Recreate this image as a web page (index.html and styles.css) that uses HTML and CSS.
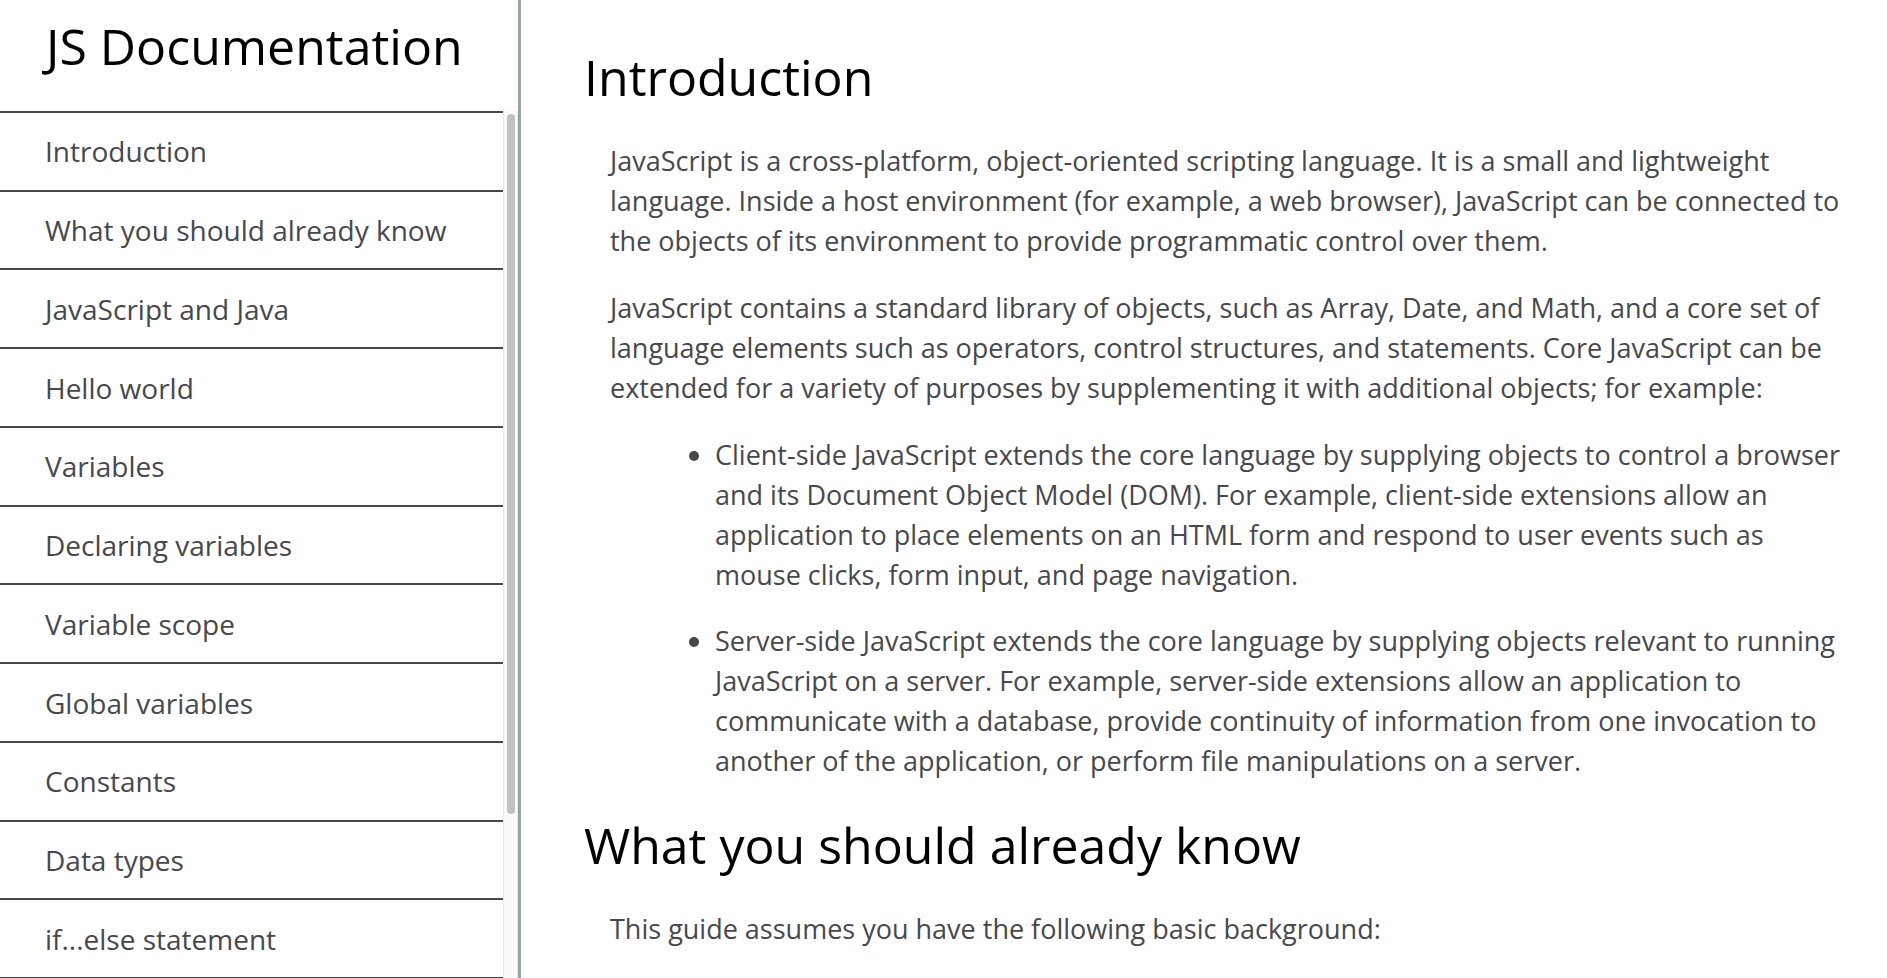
FILE: index.html
```html
<!DOCTYPE html>
<html lang="en">
<head>
<meta charset="utf-8">
<title>JS Documentation</title>
<link rel="stylesheet" href="styles.css">
</head>
<body>
<div class="page">
  <nav class="sidebar" aria-labelledby="nav-title">
    <h1 class="sidebar-title" id="nav-title">JS Documentation</h1>
    <div class="sidebar-body">
      <ul class="nav-list">
        <li class="nav-item"><a class="nav-link" href="#introduction">Introduction</a></li>
        <li class="nav-item"><a class="nav-link" href="#what_you_should_already_know">What you should already know</a></li>
        <li class="nav-item"><a class="nav-link" href="#javascript_and_java">JavaScript and Java</a></li>
        <li class="nav-item"><a class="nav-link" href="#hello_world">Hello world</a></li>
        <li class="nav-item"><a class="nav-link" href="#variables">Variables</a></li>
        <li class="nav-item"><a class="nav-link" href="#declaring_variables">Declaring variables</a></li>
        <li class="nav-item"><a class="nav-link" href="#variable_scope">Variable scope</a></li>
        <li class="nav-item"><a class="nav-link" href="#global_variables">Global variables</a></li>
        <li class="nav-item"><a class="nav-link" href="#constants">Constants</a></li>
        <li class="nav-item"><a class="nav-link" href="#data_types">Data types</a></li>
        <li class="nav-item"><a class="nav-link" href="#if_else_statement">if...else statement</a></li>
      </ul>
      <div class="scroll-track" aria-hidden="true"><div class="scroll-thumb"></div></div>
    </div>
  </nav>
  <main class="content">
    <section class="doc-section" id="introduction">
      <h2 class="doc-heading">Introduction</h2>
      <div class="doc-body">
        <p class="doc-text">JavaScript is a cross-platform, object-oriented scripting language. It is a small and lightweight language. Inside a host environment (for example, a web browser), JavaScript can be connected to the objects of its environment to provide programmatic control over them.</p>
        <p class="doc-text">JavaScript contains a standard library of objects, such as Array, Date, and Math, and a core set of language elements such as operators, control structures, and statements. Core JavaScript can be extended for a variety of purposes by supplementing it with additional objects; for example:</p>
        <ul class="doc-list">
          <li>Client-side JavaScript extends the core language by supplying objects to control a browser and its Document Object Model (DOM). For example, client-side extensions allow an application to place elements on an HTML form and respond to user events such as mouse clicks, form input, and page navigation.</li>
          <li>Server-side JavaScript extends the core language by supplying objects relevant to running JavaScript on a server. For example, server-side extensions allow an application to communicate with a database, provide continuity of information from one invocation to another of the application, or perform file manipulations on a server.</li>
        </ul>
      </div>
    </section>
    <section class="doc-section" id="what_you_should_already_know">
      <h2 class="doc-heading">What you should already know</h2>
      <div class="doc-body">
        <p class="doc-text">This guide assumes you have the following basic background:</p>
      </div>
    </section>
  </main>
</div>
</body>
</html>
```

FILE: styles.css
```css
* {
  box-sizing: border-box;
}

body {
  margin: 0;
  background: #fff;
  color: #47484c;
  font-family: "Open Sans", Arial, sans-serif;
  font-size: 27px;
  line-height: 40px;
}

.page {
  display: flex;
  height: 100vh;
  overflow: hidden;
}

.sidebar {
  display: flex;
  flex: 0 0 521px;
  flex-direction: column;
  border-right: 3px solid #96a4a4;
}

.sidebar-title {
  margin: 0;
  padding: 11px 0 30px 46px;
  color: #000;
  font-size: 50px;
  font-weight: 400;
  line-height: 70px;
  white-space: nowrap;
}

.sidebar-body {
  display: flex;
  flex: 1;
  min-height: 0;
}

.nav-list {
  display: flex;
  flex: 1;
  flex-direction: column;
  margin: 0;
  padding: 0;
  border-bottom: 1px solid #47474c;
  font-size: 28px;
  list-style: none;
}

.nav-item {
  display: flex;
  flex: 1;
  border-top: 2px solid #47474c;
}

.nav-link {
  display: flex;
  flex: 1;
  align-items: center;
  padding-left: 45px;
  color: inherit;
  text-decoration: none;
  white-space: nowrap;
}

.scroll-track {
  width: 15px;
  padding: 3px 2px 0 3px;
  border: solid #e8e8e8;
  border-width: 0 1px;
  background: #fafafa;
}

.scroll-thumb {
  width: 8px;
  height: 81%;
  border-radius: 4px;
  background: #c1c1c1;
}

.content {
  flex: 1;
  padding: 41px 40px 0 63px;
}

.doc-section {
  margin-bottom: 28px;
}

.doc-heading {
  margin: 0 0 28px;
  color: #000;
  font-size: 50px;
  font-weight: 400;
  line-height: 72px;
}

.doc-body {
  padding-left: 26px;
}

.doc-text {
  margin: 0 0 27px;
}

.doc-list {
  margin: 0;
  padding-left: 105px;
}

.doc-list li + li {
  margin-top: 26px;
}
```
